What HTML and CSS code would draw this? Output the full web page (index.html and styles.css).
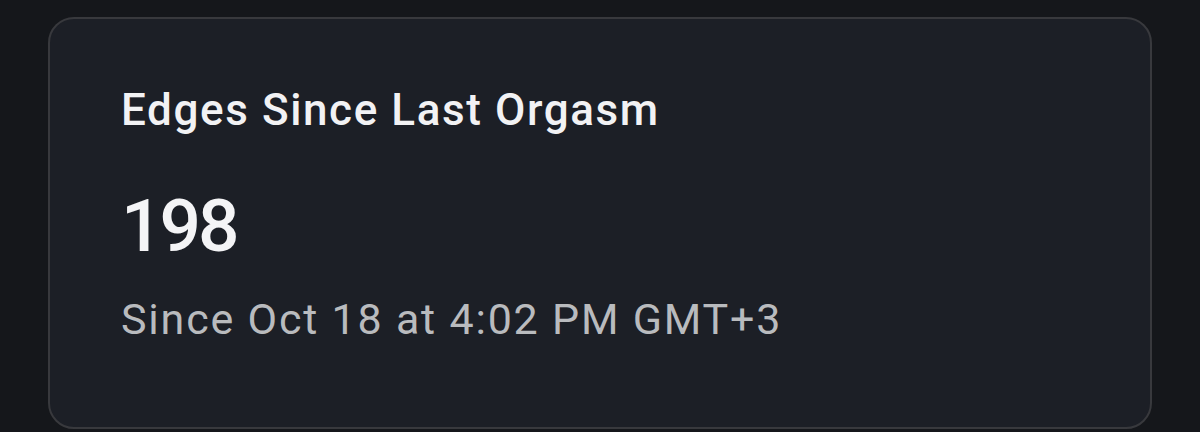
FILE: index.html
```html
<!DOCTYPE html>
<html>
<head>
<meta charset="utf-8">
<link rel="stylesheet" href="styles.css">
</head>
<body>
<div class="card">
  <div class="title">Edges Since Last Orgasm</div>
  <div class="value">198</div>
  <div class="since">Since Oct 18 at 4:02 PM GMT+3</div>
</div>
</body>
</html>
```

FILE: styles.css
```css
html, body {
  margin: 0;
  height: 100%;
}
body {
  background: #15171b;
  font-family: Roboto, "Noto Sans", sans-serif;
  padding: 17px 48px 0 48px;
  box-sizing: border-box;
  overflow: hidden;
}
.card {
  box-sizing: border-box;
  width: 1104px;
  height: 412px;
  background: #1c1f26;
  border: 2px solid #38393d;
  border-radius: 26px;
  padding: 66px 70px 0 71px;
  display: flex;
  flex-direction: column;
}
.title {
  color: #f2f2f4;
  font-size: 44px;
  font-weight: 500;
  line-height: 50px;
  letter-spacing: 1.6px;
}
.value {
  color: #f4f4f6;
  font-size: 73px;
  font-weight: 500;
  line-height: 80px;
  letter-spacing: -3px;
  margin-top: 51px;
}
.since {
  color: #b9bbbe;
  font-size: 43px;
  font-weight: 400;
  line-height: 50px;
  letter-spacing: 1.8px;
  margin-top: 28px;
}
```
